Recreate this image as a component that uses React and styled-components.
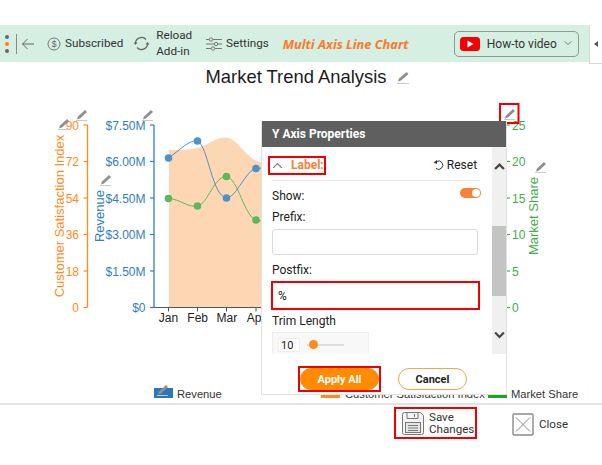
import React from 'react'
import styled, { createGlobalStyle } from 'styled-components'

const ORANGE = '#ff8c1a'
const BLUE = '#2f80bd'
const GREEN = '#3fae49'
const RED = '#f00000'
const UI_FONT = 'Roboto, "Noto Sans", sans-serif'

const GlobalStyle = createGlobalStyle`
  html, body { margin: 0; padding: 0; background: #fff; }
  body { font-family: ${UI_FONT}; color: #222; }
`

const Page = styled.div`
  position: relative;
  width: 602px;
  height: 465px;
  overflow: hidden;
  padding-top: 25px;
  box-sizing: border-box;
  display: flex;
  flex-direction: column;
`

const TopRow = styled.div`
  display: flex;
  height: 37px;
`

const Toolbar = styled.div`
  width: 589px;
  height: 37px;
  flex: none;
  background: #d5efe2;
  display: flex;
  align-items: center;
  font-size: 11.7px;
  color: #333;
  box-sizing: border-box;
  padding-left: 5px;
`

const Dots = styled.div`
  display: flex;
  flex-direction: column;
  gap: 3px;
  width: 6px;
  flex: none;
`

const Dot = styled.span`
  width: 4px;
  height: 4px;
  border-radius: 50%;
  background: ${p => p.$color};
`

const Separator = styled.span`
  width: 1px;
  height: 20px;
  flex: none;
  background: #8a8a8a;
  margin: 0 4px 0 5px;
`

const ToolItem = styled.div`
  display: flex;
  align-items: center;
  flex: none;
  gap: ${p => p.$gap || 4}px;
  margin-left: ${p => p.$left || 0}px;
  line-height: 15.5px;
  white-space: nowrap;
`

const ChartName = styled.span`
  margin-left: 14px;
  color: #ff7a2b;
  font-family: "Noto Sans", sans-serif;
  font-weight: 700;
  font-style: italic;
  font-size: 12.8px;
  width: 171px;
  flex: none;
  white-space: nowrap;
`

const VideoButton = styled.div`
  width: 125px;
  height: 26px;
  flex: none;
  box-sizing: border-box;
  border: 1px solid #8c9a92;
  border-radius: 5px;
  display: flex;
  align-items: center;
  justify-content: space-between;
  padding: 0 6px 0 5px;
  font-size: 12px;
  white-space: nowrap;
`

const CollapseTab = styled.div`
  width: 13px;
  height: 39px;
  flex: none;
  box-sizing: border-box;
  border-left: 1px solid #d8d8d8;
  border-bottom: 1px solid #d8d8d8;
  display: flex;
  align-items: center;
  justify-content: center;
  &::before {
    content: '';
    border-style: solid;
    border-width: 3.5px 4px 3.5px 0;
    border-color: transparent #555 transparent transparent;
  }
`

const ChartArea = styled.div`
  position: relative;
  height: 343px;
  flex: none;
  border-bottom: 2px solid #e4e4e4;
  box-sizing: border-box;
`

const ChartSvg = styled.svg`
  position: absolute;
  left: 0;
  top: 0;
  display: block;
  font-family: "Liberation Sans", Arial, sans-serif;
`

const TitleRow = styled.div`
  position: relative;
  display: flex;
  align-items: center;
  justify-content: center;
  gap: 11px;
  padding-top: 4px;
  height: 22px;
  margin-left: 14px;
  font-family: "Liberation Sans", Arial, sans-serif;
  font-size: 18.4px;
  color: #1c1c1c;
`

const Dialog = styled.div`
  position: absolute;
  left: 261px;
  top: 59px;
  width: 246px;
  height: 274px;
  background: #fff;
  box-sizing: border-box;
  border: 1px solid #e2e2e2;
  border-top: none;
  display: flex;
  flex-direction: column;
  font-size: 12px;
`

const DialogHeader = styled.div`
  height: 26px;
  background: #5f5f5f;
  color: #fff;
  font-weight: 700;
  font-size: 12px;
  display: flex;
  align-items: center;
  padding-left: 10px;
  flex: none;
`

const DialogBody = styled.div`
  height: 207px;
  display: flex;
  flex: none;
`

const Form = styled.div`
  width: 229px;
  height: 207px;
  overflow: hidden;
  box-sizing: border-box;
  padding: 0 10px;
  display: flex;
  flex-direction: column;
`

const SectionRow = styled.div`
  height: 34px;
  flex: none;
  border-bottom: 1px solid #e8e8e8;
  display: flex;
  align-items: center;
  justify-content: space-between;
  padding-top: 3px;
  box-sizing: border-box;
`

const SectionTitle = styled.div`
  display: flex;
  align-items: center;
  gap: 8px;
  height: 19px;
  box-sizing: border-box;
  margin-left: -4px;
  padding: 0 0 0 2px;
  border: 2px solid ${RED};
  color: #f5813a;
  font-weight: 700;
  font-size: 12px;
`

const ResetButton = styled.div`
  display: flex;
  align-items: center;
  gap: 2px;
  margin-right: 3px;
  font-size: 12px;
  color: #222;
`

const ShowRow = styled.div`
  display: flex;
  align-items: center;
  justify-content: space-between;
  height: 14px;
  margin-top: 8px;
  flex: none;
`

const Switch = styled.span`
  position: relative;
  width: 21px;
  height: 10px;
  border-radius: 5px;
  background: #f5813a;
  margin-top: -6px;
  margin-right: -1px;
  &::after {
    content: '';
    position: absolute;
    right: 1px;
    top: 1px;
    width: 8px;
    height: 8px;
    border-radius: 50%;
    background: #fff;
  }
`

const FieldLabel = styled.div`
  line-height: 14px;
  margin-top: ${p => p.$top}px;
  color: #222;
  flex: none;
`

const TextField = styled.div`
  height: 26px;
  width: 206px;
  flex: none;
  box-sizing: border-box;
  margin-top: 5px;
  border: 1px solid #dcdcdc;
  border-radius: 3px;
  padding-left: 5px;
  display: flex;
  align-items: center;
  font-size: 12px;
  ${p => p.$marked && `
    border: 2px solid ${RED};
    border-radius: 0;
    width: 209px;
    height: 29px;
    margin-left: -1px;
    margin-top: 4px;
  `}
`

const TrimBox = styled.div`
  width: 97px;
  height: 30px;
  flex: none;
  margin-top: 4px;
  background: #f8f8f8;
  border: 1px solid #efefef;
  box-sizing: border-box;
  display: flex;
  align-items: flex-start;
  padding: 5px 0 0 5px;
  gap: 7px;
`

const TrimInput = styled.div`
  width: 22px;
  height: 14px;
  background: #fff;
  border: 1px solid #eee;
  font-size: 11px;
  line-height: 13px;
  padding-left: 2px;
  box-sizing: border-box;
`

const SliderTrack = styled.div`
  position: relative;
  width: 37px;
  height: 2px;
  margin-top: 6px;
  background: #dedede;
  &::after {
    content: '';
    position: absolute;
    left: 2px;
    top: -4px;
    width: 9px;
    height: 9px;
    border-radius: 50%;
    background: ${ORANGE};
  }
`

const ScrollBar = styled.div`
  width: 14px;
  margin-left: 2px;
  background: #f0f0f0;
  position: relative;
  display: flex;
  flex-direction: column;
  align-items: center;
  justify-content: space-between;
  padding: 16px 0 15px;
  box-sizing: border-box;
`

const ScrollThumb = styled.div`
  position: absolute;
  left: 0;
  top: 79px;
  width: 14px;
  height: 70px;
  background: #c4c4c4;
`

const DialogFooter = styled.div`
  display: flex;
  align-items: center;
  padding: 12px 0 0 36px;
  gap: 17px;
`

const MarkBox = styled.div`
  border: 2px solid ${RED};
  display: flex;
`

const PillButton = styled.div`
  width: ${p => p.$width}px;
  height: 22px;
  box-sizing: border-box;
  border-radius: 11px;
  display: flex;
  align-items: center;
  justify-content: center;
  font-size: 11px;
  font-weight: 700;
  background: ${p => (p.$primary ? '#ff8c00' : '#fff')};
  color: ${p => (p.$primary ? '#fff' : '#222')};
  border: 1px solid ${p => (p.$primary ? '#ff8c00' : '#f5a54a')};
`

const Footer = styled.div`
  display: flex;
  align-items: flex-start;
  height: 60px;
  font-size: 11.6px;
  color: #333;
  line-height: 12.5px;
  padding: 2px 0 0 394px;
  box-sizing: border-box;
`

const SaveButton = styled.div`
  width: 83px;
  height: 32px;
  flex: none;
  box-sizing: border-box;
  border: 2px solid ${RED};
  display: flex;
  align-items: center;
  gap: 5px;
  padding-left: 6px;
`

const CloseButton = styled.div`
  display: flex;
  align-items: center;
  gap: 5px;
  margin: 6px 0 0 35px;
`

const Pencil = ({ x, y }) => (
  <g transform={`translate(${x} ${y})`}>
    <path d="M1 10.5 2 7.5 9 1 11 3 4 9.5Z" fill="#8f8f8f" />
    <path d="M0 11.5 L11 11.5" stroke="#c9c9c9" strokeWidth="1" fill="none" />
  </g>
)

const AxisTicks = ({ axisX, labels, color, side }) => {
  const ys = [125, 161.5, 198, 234.5, 271, 307.5]
  const right = side === 'right'
  return (
    <g>
      {!right && <path d={`M${axisX} 125 V307.5`} fill="none" stroke={color} strokeWidth="1.3" />}
      {ys.map((y, i) => (
        <g key={y}>
          <path d={`M${axisX} ${y} h${right ? 3 : -4}`} stroke={color} strokeWidth="1.2" />
          <text x={axisX + (right ? 5 : -8.5)} y={y + 4.5} fontSize="12" fill={color} textAnchor={right ? 'start' : 'end'}>
            {labels[i]}
          </text>
        </g>
      ))}
    </g>
  )
}

const SideTitle = ({ x, y, color, children }) => (
  <text transform={`translate(${x} ${y}) rotate(-90)`} fontSize="13" fill={color} textAnchor="middle">
    {children}
  </text>
)

const LegendLabel = styled.text`
  font-size: 11.2px;
  fill: #333;
`

const Chart = () => (
  <ChartSvg width="602" height="342" viewBox="0 62 602 342">
    <path d="M169 150 C180 150 188 150 197.5 148 C208 145 216 137 226 137.5 C238 138 244 158 262 163 V307.5 H169 Z" fill="#fdd6b3" />
    <AxisTicks axisX={87.5} side="left" color={ORANGE} labels={[90, 72, 54, 36, 18, 0]} />
    <AxisTicks axisX={154} side="left" color={BLUE} labels={['$7.50M', '$6.00M', '$4.50M', '$3.00M', '$1.50M', '$0']} />
    <AxisTicks axisX={507} side="right" color={GREEN} labels={[25, 20, 15, 10, 5, 0]} />
    <SideTitle x={64} y={216} color={ORANGE}>Customer Satisfaction Index</SideTitle>
    <SideTitle x={104} y={216} color={BLUE}>Revenue</SideTitle>
    <SideTitle x={538} y={216} color={GREEN}>Market Share</SideTitle>
    <path d="M154 307.5 H262 M168.5 307.5 v4 M197.5 307.5 v4 M226.5 307.5 v4 M256 307.5 v4" stroke="#555" strokeWidth="1" fill="none" />
    {['Jan', 'Feb', 'Mar', 'Apr'].map((m, i) => (
      <text key={m} x={168.5 + i * 29.2} y={322} fontSize="12" fill="#222" textAnchor="middle">{m}</text>
    ))}
    <path d="M168.5 158 C180 150 190 139 197.5 141 C208 146 212 196 226.5 198 C236 198 246 170 256 168.5 L262 168" fill="none" stroke={BLUE} strokeWidth="1" opacity="0.8" />
    <path d="M168.5 198.5 C180 199 188 208 197.5 206 C208 204 214 176 226.5 176.5 C238 178 244 216 256 220 L262 221" fill="none" stroke={GREEN} strokeWidth="1" opacity="0.8" />
    {[[168.5, 158], [197.5, 141], [226.5, 198], [256, 168.5]].map(([cx, cy]) => (
      <circle key={cx} cx={cx} cy={cy} r="3.8" fill="#4b93c9" />
    ))}
    {[[168.5, 198.5], [197.5, 206], [226.5, 176.5], [256, 220]].map(([cx, cy]) => (
      <circle key={cx} cx={cx} cy={cy} r="3.8" fill="#5cb85c" />
    ))}
    <Pencil x={58} y={118} />
    <Pencil x={76} y={109} />
    <Pencil x={142} y={109} />
    <Pencil x={100} y={174} />
    <Pencil x={535} y={161} />
    <Pencil x={504} y={108} />
    <rect x="500" y="104" width="18.5" height="19" fill="none" stroke={RED} strokeWidth="2" />
    <rect x="154" y="388" width="19" height="10" fill="#2a78b8" />
    <Pencil x={157} y={384} />
    <LegendLabel x="177" y="398">Revenue</LegendLabel>
    <rect x="321" y="388" width="19" height="10" fill={ORANGE} />
    <LegendLabel x="345" y="398">Customer Satisfaction Index</LegendLabel>
    <rect x="488" y="388" width="19" height="10" fill="#23a127" />
    <LegendLabel x="511" y="398">Market Share</LegendLabel>
  </ChartSvg>
)

const BackIcon = () => (
  <svg width="14" height="12" viewBox="0 0 14 12"><path d="M13 6H1.5M6.5 1 1.5 6l5 5" fill="none" stroke="#666" strokeWidth="1" /></svg>
)

const DollarIcon = () => (
  <svg width="14" height="14" viewBox="0 0 14 14">
    <circle cx="7" cy="7" r="6" fill="none" stroke="#777" strokeWidth="1" />
    <text x="7" y="10" fontSize="8.5" textAnchor="middle" fill="#666" fontFamily="Liberation Sans">$</text>
  </svg>
)

const ReloadIcon = () => (
  <svg width="17" height="15" viewBox="0 0 17 15">
    <path d="M2.5 7.5A6 6 0 0 1 13 3.5M14.5 7.5A6 6 0 0 1 4 11.5" fill="none" stroke="#666" strokeWidth="1.2" />
    <path d="M0.5 6.5h4L2.5 9zM12.5 8.5h4L14.5 6z" fill="#666" />
  </svg>
)

const SlidersIcon = () => (
  <svg width="16" height="14" viewBox="0 0 16 14" fill="none" stroke="#777" strokeWidth="1">
    <path d="M0 2.5h3M7 2.5h9M0 7h8M12 7h4M0 11.5h5M9 11.5h7" />
    <circle cx="5" cy="2.5" r="1.7" /><circle cx="10" cy="7" r="1.7" /><circle cx="7" cy="11.5" r="1.7" />
  </svg>
)

const YoutubeIcon = () => (
  <svg width="20" height="14" viewBox="0 0 20 14">
    <rect width="20" height="14" rx="3.5" fill="#f40000" />
    <path d="M7.5 3.5v7l6-3.5z" fill="#fff" />
  </svg>
)

const Chevron = ({ up, color = '#555', size = 8, width = 1 }) => (
  <svg width={size} height={size * 0.6} viewBox="0 0 10 6">
    <path d={up ? 'M1 5.5 5 1.5l4 4' : 'M1 .5l4 4 4-4'} fill="none" stroke={color} strokeWidth={width} />
  </svg>
)

const EditIcon = () => (
  <svg width="13" height="13" viewBox="0 0 13 13">
    <path d="M1 10.5 2 7.5 9.5 1 11.5 3 4 9.5Z" fill="#8f8f8f" />
    <path d="M0 12.5h12" stroke="#c9c9c9" strokeWidth="1" />
  </svg>
)

const ResetIcon = () => (
  <svg width="12" height="12" viewBox="0 0 12 12">
    <path d="M3.5 2.5A4.2 4.2 0 1 1 3 9.5" fill="none" stroke="#333" strokeWidth="1" />
    <path d="M0.5 3.5 4 1v4z" fill="#333" />
  </svg>
)

const SaveIcon = () => (
  <svg width="22" height="23" viewBox="0 0 22 23" fill="none" stroke="#777" strokeWidth="1">
    <path d="M2.5.5h16l3 3v17a2 2 0 0 1-2 2h-17a2 2 0 0 1-2-2v-18a2 2 0 0 1 2-2z" fill="#f4f4f4" />
    <path d="M5 .5v6h11v-6M12.5 2v3" />
    <rect x="3.5" y="10.5" width="15" height="10" fill="#e6e6e6" />
    <path d="M6 13.5h10M6 16h10M6 18.5h10" />
  </svg>
)

const CloseIcon = () => (
  <svg width="22" height="23" viewBox="0 0 22 23" fill="none" stroke="#8a8a8a">
    <rect x="1" y="1" width="20" height="21" rx="1" strokeWidth="1.4" fill="#fff" />
    <path d="M4 4.5 18 18.5M18 4.5 4 18.5" strokeWidth="1" />
  </svg>
)

const App = () => (
  <Page>
    <GlobalStyle />
    <TopRow>
      <Toolbar>
        <Dots>
          <Dot $color="#666" />
          <Dot $color="#ff7a2b" />
          <Dot $color="#666" />
        </Dots>
        <Separator />
        <BackIcon />
        <ToolItem $left={12}><DollarIcon />Subscribed</ToolItem>
        <ToolItem $left={10} $gap={6}><ReloadIcon /><span>Reload<br />Add-in</span></ToolItem>
        <ToolItem $left={14}><SlidersIcon />Settings</ToolItem>
        <ChartName>Multi Axis Line Chart</ChartName>
        <VideoButton>
          <YoutubeIcon />
          <span>How-to video</span>
          <Chevron />
        </VideoButton>
      </Toolbar>
      <CollapseTab />
    </TopRow>
    <ChartArea>
      <Chart />
      <TitleRow>Market Trend Analysis <EditIcon /></TitleRow>
      <Dialog>
        <DialogHeader>Y Axis Properties</DialogHeader>
        <DialogBody>
          <Form>
            <SectionRow>
              <SectionTitle><Chevron up size={11} color="#777" />Label:</SectionTitle>
              <ResetButton><ResetIcon />Reset</ResetButton>
            </SectionRow>
            <ShowRow>Show:<Switch /></ShowRow>
            <FieldLabel $top={7}>Prefix:</FieldLabel>
            <TextField />
            <FieldLabel $top={8}>Postfix:</FieldLabel>
            <TextField $marked>%</TextField>
            <FieldLabel $top={4}>Trim Length</FieldLabel>
            <TrimBox>
              <TrimInput>10</TrimInput>
              <SliderTrack />
            </TrimBox>
          </Form>
          <ScrollBar>
            <Chevron up size={11} color="#444" width={2} />
            <ScrollThumb />
            <Chevron size={11} color="#444" width={2} />
          </ScrollBar>
        </DialogBody>
        <DialogFooter>
          <MarkBox><PillButton $primary $width={79}>Apply All</PillButton></MarkBox>
          <PillButton $width={69}>Cancel</PillButton>
        </DialogFooter>
      </Dialog>
    </ChartArea>
    <Footer>
      <SaveButton><SaveIcon /><span>Save<br />Changes</span></SaveButton>
      <CloseButton><CloseIcon />Close</CloseButton>
    </Footer>
  </Page>
)

export default App
